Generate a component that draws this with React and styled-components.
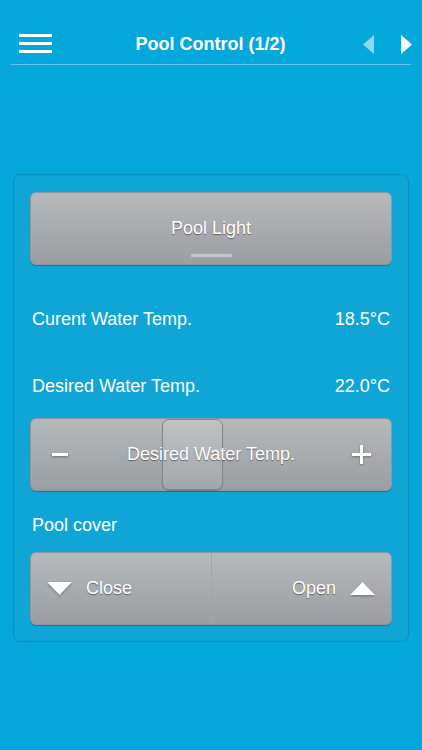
import React from "react";
import styled, { createGlobalStyle } from "styled-components";

const Global = createGlobalStyle`
  html, body { margin: 0; padding: 0; background: #04a8db; }
  body { font-family: "Liberation Sans", Arial, sans-serif; color: #fff; }
`;

const Page = styled.div`
  width: 422px;
  min-height: 750px;
  background: #04a8db;
  overflow: hidden;
`;

const Header = styled.header`
  margin: 0 11px;
  padding: 24px 0 0 8px;
  height: 40px;
  display: flex;
  align-items: center;
  border-bottom: 1px solid #62c6ec;
`;

const Burger = styled.div`
  width: 33px;
  margin-top: -2px;
  display: flex;
  flex-direction: column;
  gap: 5px;
  span {
    display: block;
    height: 3px;
    background: #fff;
  }
`;

const Title = styled.h1`
  flex: 1;
  margin: 0;
  text-align: center;
  font-size: 18px;
  font-weight: bold;
  padding-left: 6px;
`;

const Arrows = styled.div`
  display: flex;
  gap: 27px;
  align-items: center;
  margin-right: -1px;
`;

const Arrow = styled.svg`
  display: block;
  width: 11px;
  height: 19px;
`;

const Panel = styled.section`
  margin: 109px 13px 0;
  padding: 17px 16px 16px;
  background: #0fa6d7;
  border: 1px solid #0b8fbd;
  border-radius: 7px;
  display: flex;
  flex-direction: column;
`;

const GrayButton = styled.div`
  position: relative;
  height: 73px;
  box-sizing: border-box;
  border-radius: 6px;
  border: 1px solid #8b989e;
  background: linear-gradient(#b6b9bc, #9b9ea1);
  box-shadow: 0 1px 1px rgba(0, 40, 70, 0.35);
  display: flex;
  align-items: center;
  justify-content: center;
  font-size: 18px;
  color: #fff;
  text-shadow: 0 1px 1px rgba(0, 0, 0, 0.45);
`;

const LightLabel = styled.span`
  margin-top: 0px;
`;

const Indicator = styled.span`
  position: absolute;
  left: 160px;
  bottom: 7px;
  width: 41px;
  height: 3px;
  border-radius: 2px;
  background: #c4c6c9;
  box-shadow: 0 0 0 1px #a5a8ab;
`;

const InfoRow = styled.div`
  display: flex;
  justify-content: space-between;
  align-items: center;
  height: 20px;
  margin-top: ${(p) => p.$mt}px;
  padding: 0 2px;
  font-size: 18px;
  line-height: 20px;
`;

const Slider = styled(GrayButton)`
  margin-top: 22px;
  justify-content: space-between;
  padding: 0 20px 0 21px;
`;

const SliderLabel = styled.span`
  position: absolute;
  left: 0;
  right: 0;
  text-align: center;
  z-index: 2;
  pointer-events: none;
`;

const Thumb = styled.div`
  position: absolute;
  left: 131px;
  top: 0;
  width: 61px;
  height: 71px;
  box-sizing: border-box;
  border-radius: 7px;
  border: 1px solid #7f878c;
  background: linear-gradient(#bfc1c4, #a4a7aa);
  box-shadow: 0 1px 1px rgba(0, 0, 0, 0.2);
  z-index: 1;
`;

const Sign = styled.svg`
  display: block;
  position: relative;
  z-index: 3;
  filter: drop-shadow(0 1px 1px rgba(0, 0, 0, 0.35));
`;

const CoverLabel = styled.div`
  margin-top: 24px;
  padding-left: 2px;
  font-size: 18px;
  line-height: 20px;
`;

const CoverButton = styled(GrayButton)`
  margin-top: 17px;
  display: grid;
  grid-template-columns: 1fr 1fr;
  align-items: stretch;
`;

const CoverHalf = styled.div`
  display: flex;
  align-items: center;
  gap: 14px;
  justify-content: ${(p) => (p.$right ? "flex-end" : "flex-start")};
  padding: ${(p) => (p.$right ? "0 16px 0 0" : "0 0 0 16px")};
  border-left: ${(p) => (p.$right ? "1px solid #a2a5a8" : "none")};
`;

const Tri = styled.svg`
  display: block;
  width: 25px;
  height: 13px;
  filter: drop-shadow(0 1px 1px rgba(0, 0, 0, 0.35));
`;

export default function App() {
  return (
    <Page>
      <Global />
      <Header>
        <Burger>
          <span />
          <span />
          <span />
        </Burger>
        <Title>Pool Control (1/2)</Title>
        <Arrows>
          <Arrow viewBox="0 0 11 19">
            <polygon points="11,0 11,19 0,9.5" fill="#8fd6f1" />
          </Arrow>
          <Arrow viewBox="0 0 11 19">
            <polygon points="0,0 0,19 11,9.5" fill="#ffffff" />
          </Arrow>
        </Arrows>
      </Header>

      <Panel>
        <GrayButton>
          <LightLabel>Pool Light</LightLabel>
          <Indicator />
        </GrayButton>

        <InfoRow $mt={44}>
          <span>Curent Water Temp.</span>
          <span>18.5°C</span>
        </InfoRow>
        <InfoRow $mt={47}>
          <span>Desired Water Temp.</span>
          <span>22.0°C</span>
        </InfoRow>

        <Slider>
          <Sign width="16" height="3" viewBox="0 0 16 3">
            <rect x="0" y="0" width="16" height="3" fill="#fff" />
          </Sign>
          <Thumb />
          <SliderLabel>Desired Water Temp.</SliderLabel>
          <Sign width="19" height="19" viewBox="0 0 19 19">
            <rect x="0" y="8" width="19" height="3" fill="#fff" />
            <rect x="8" y="0" width="3" height="19" fill="#fff" />
          </Sign>
        </Slider>

        <CoverLabel>Pool cover</CoverLabel>
        <CoverButton>
          <CoverHalf>
            <Tri viewBox="0 0 25 13">
              <polygon points="0,0 25,0 12.5,13" fill="#fff" />
            </Tri>
            <span>Close</span>
          </CoverHalf>
          <CoverHalf $right>
            <span>Open</span>
            <Tri viewBox="0 0 25 13">
              <polygon points="0,13 25,13 12.5,0" fill="#fff" />
            </Tri>
          </CoverHalf>
        </CoverButton>
      </Panel>
    </Page>
  );
}
